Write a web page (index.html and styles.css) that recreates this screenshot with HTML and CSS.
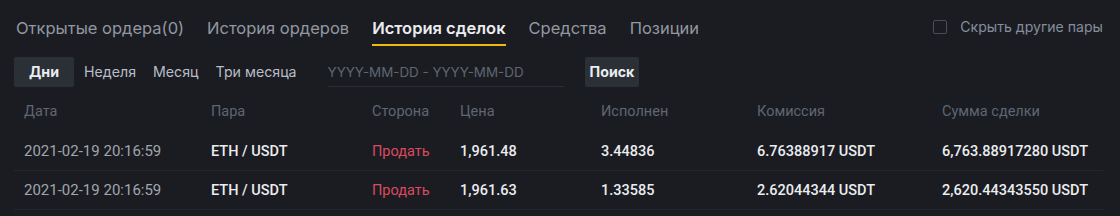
FILE: index.html
```html
<!DOCTYPE html>
<html lang="ru">
<head>
<meta charset="utf-8">
<link rel="stylesheet" href="styles.css">
</head>
<body>
<div class="panel">
  <div class="tabs">
    <div class="tab">Открытые ордера(0)</div>
    <div class="tab">История ордеров</div>
    <div class="tab active">История сделок</div>
    <div class="tab">Средства</div>
    <div class="tab">Позиции</div>
    <label class="hide-pairs"><span class="checkbox"></span><span>Скрыть другие пары</span></label>
  </div>
  <div class="filters">
    <div class="period active">Дни</div>
    <div class="period">Неделя</div>
    <div class="period">Месяц</div>
    <div class="period">Три месяца</div>
    <div class="date-range">YYYY-MM-DD - YYYY-MM-DD</div>
    <div class="search">Поиск</div>
  </div>
  <div class="table">
    <div class="row head">
      <div class="c date">Дата</div>
      <div class="c pair">Пара</div>
      <div class="c side">Сторона</div>
      <div class="c price">Цена</div>
      <div class="c filled">Исполнен</div>
      <div class="c fee">Комиссия</div>
      <div class="c total">Сумма сделки</div>
    </div>
    <div class="row">
      <div class="c date">2021-02-19 20:16:59</div>
      <div class="c pair val">ETH / USDT</div>
      <div class="c side sell">Продать</div>
      <div class="c price val">1,961.48</div>
      <div class="c filled val">3.44836</div>
      <div class="c fee val">6.76388917 USDT</div>
      <div class="c total val">6,763.88917280 USDT</div>
    </div>
    <div class="row">
      <div class="c date">2021-02-19 20:16:59</div>
      <div class="c pair val">ETH / USDT</div>
      <div class="c side sell">Продать</div>
      <div class="c price val">1,961.63</div>
      <div class="c filled val">1.33585</div>
      <div class="c fee val">2.62044344 USDT</div>
      <div class="c total val">2,620.44343550 USDT</div>
    </div>
  </div>
</div>
</body>
</html>
```
FILE: styles.css
```css
* { box-sizing: border-box; }
html, body {
  margin: 0;
  padding: 0;
  background: #1b1c21;
}
body {
  width: 1120px;
  height: 216px;
  overflow: hidden;
  font-family: Inter, "Noto Sans", sans-serif;
  color: #eaecef;
}
.panel {
  padding: 0 17px 0 14px;
}
.tabs {
  display: flex;
  align-items: flex-end;
  gap: 23px;
  padding-left: 2px;
  height: 46px;
}
.tab {
  font-size: 16.5px;
  line-height: 24px;
  padding: 16px 0 4px;
  border-bottom: 2px solid transparent;
  color: #9298a2;
  white-space: nowrap;
}
.tab.active {
  color: #eaecef;
  font-weight: 600;
  border-bottom-color: #f0b90b;
}
.hide-pairs {
  margin-left: auto;
  align-self: flex-start;
  margin-top: 20px;
  display: flex;
  align-items: center;
  gap: 13px;
  font-size: 14.1px;
  line-height: 14px;
  color: #848e9c;
}
.checkbox {
  width: 14px;
  height: 14px;
  border: 1.5px solid #474d57;
  border-radius: 2px;
}
.filters {
  display: flex;
  align-items: center;
  gap: 17px;
  margin-top: 11px;
  height: 30px;
  font-size: 14.2px;
}
.period {
  height: 30px;
  line-height: 30px;
  color: #b7bdc6;
}
.period.active {
  width: 60px;
  text-align: center;
  margin-right: -7px;
  background: #2b2f36;
  border-radius: 2px;
  color: #eaecef;
  font-weight: 700;
}
.date-range {
  margin-left: 14px;
  width: 236px;
  height: 30px;
  line-height: 30px;
  font-size: 13.4px;
  color: #5e6673;
  border-bottom: 1px solid #2b2f36;
}
.search {
  margin-left: 4px;
  height: 30px;
  line-height: 30px;
  padding: 0 5px;
  background: #2b2f36;
  border-radius: 2px;
  font-weight: 700;
  color: #eaecef;
}
.table {
  margin-top: 5px;
}
.row {
  display: flex;
  align-items: center;
  height: 39px;
  padding-left: 10px;
  border-bottom: 1px solid #24262c;
  font-family: Roboto, "Noto Sans", sans-serif;
  font-size: 14.5px;
}
.row.head {
  height: 40px;
  padding-bottom: 2px;
  border-bottom: none;
}
.c { white-space: nowrap; }
.date { width: 187px; }
.pair { width: 161px; }
.side { width: 88px; }
.price { width: 141px; }
.filled { width: 156px; }
.fee { width: 185px; }
.row .date { color: #a0a6ae; font-size: 15px; }
.row.head .c { color: #5e6673; font-weight: 400; font-size: 14.5px; }
.val { font-weight: 500; color: #eaecef; }
.sell { color: #dc4a5f; }
```
